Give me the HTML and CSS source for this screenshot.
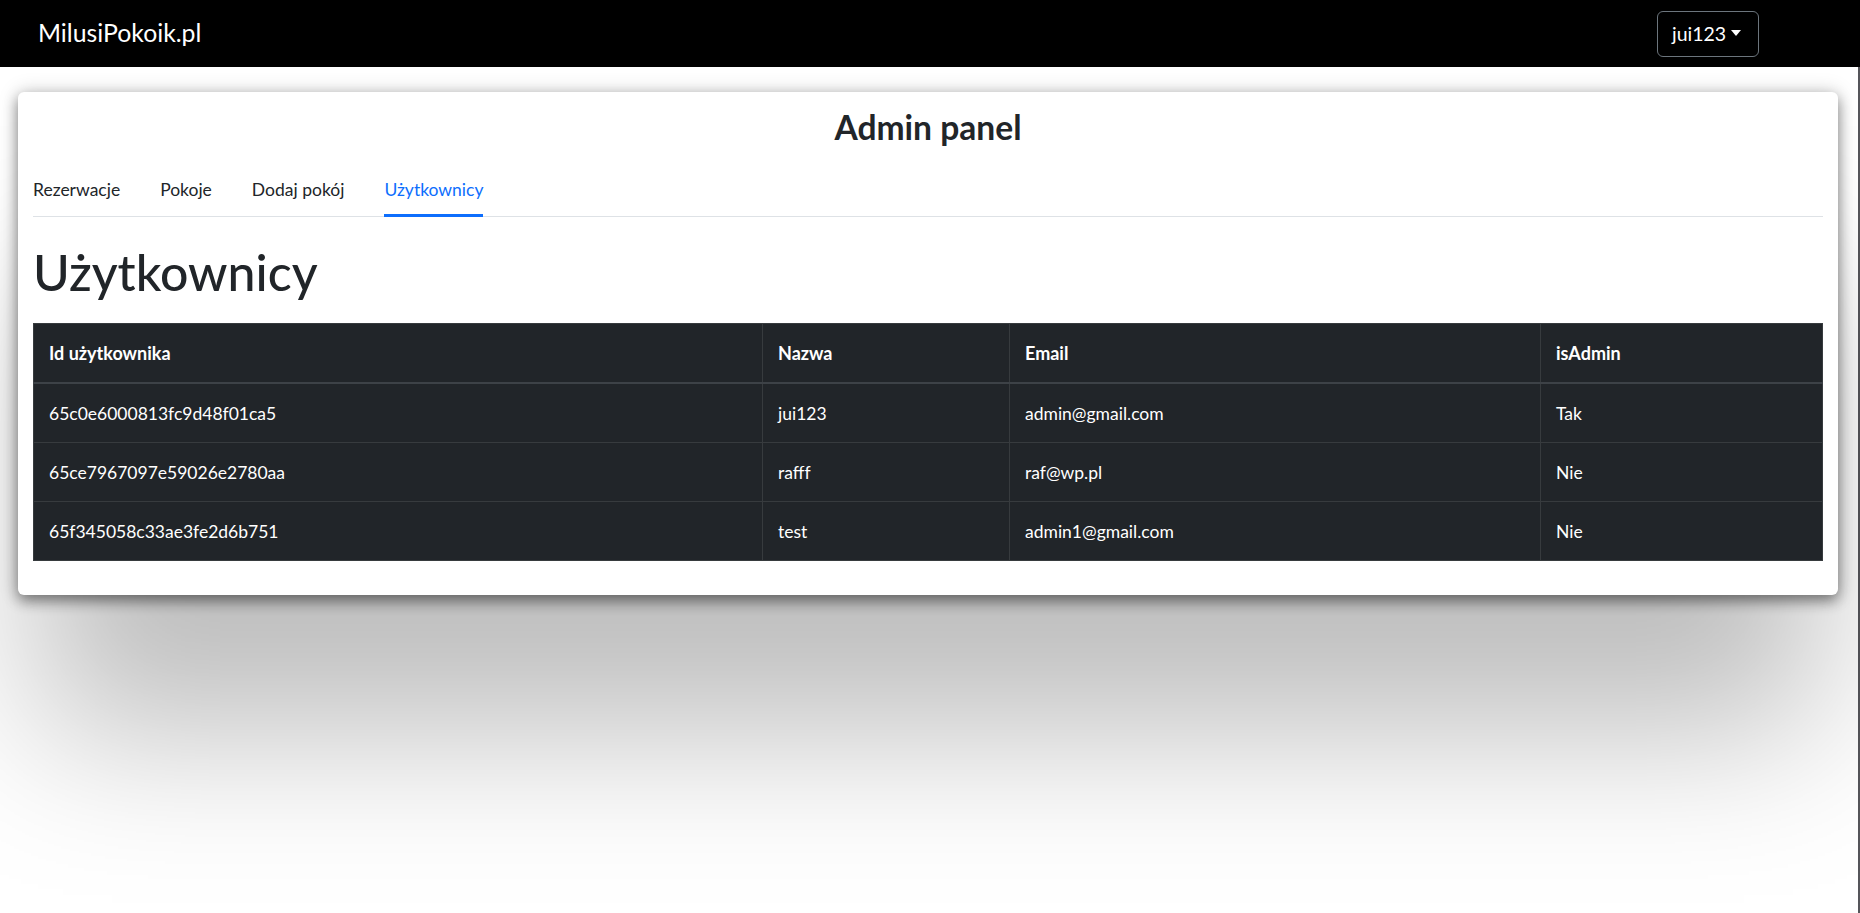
FILE: index.html
```html
<!DOCTYPE html>
<html lang="pl">
<head>
<meta charset="utf-8">
<title>MilusiPokoik.pl</title>
<link rel="stylesheet" href="styles.css">
</head>
<body>
<header class="navbar">
  <a class="brand" href="#">MilusiPokoik.pl</a>
  <button class="user-btn" type="button"><span>jui123</span><span class="caret"></span></button>
</header>
<main class="page">
  <section class="card">
    <h3 class="panel-title">Admin panel</h3>
    <nav class="tabs">
      <a class="tab" href="#">Rezerwacje</a>
      <a class="tab" href="#">Pokoje</a>
      <a class="tab" href="#">Dodaj pokój</a>
      <a class="tab active" href="#">Użytkownicy</a>
    </nav>
    <h1 class="heading">Użytkownicy</h1>
    <table class="users">
      <colgroup>
        <col class="c-id"><col class="c-name"><col class="c-email"><col class="c-admin">
      </colgroup>
      <thead>
        <tr><th>Id użytkownika</th><th>Nazwa</th><th>Email</th><th>isAdmin</th></tr>
      </thead>
      <tbody>
        <tr><td>65c0e6000813fc9d48f01ca5</td><td>jui123</td><td>admin@gmail.com</td><td>Tak</td></tr>
        <tr><td>65ce7967097e59026e2780aa</td><td>rafff</td><td>raf@wp.pl</td><td>Nie</td></tr>
        <tr><td>65f345058c33ae3fe2d6b751</td><td>test</td><td>admin1@gmail.com</td><td>Nie</td></tr>
      </tbody>
    </table>
  </section>
</main>
</body>
</html>
```
FILE: styles.css
```css
* { box-sizing: border-box; }
html, body { margin: 0; padding: 0; }
body {
  font-family: Lato, "Open Sans", sans-serif;
  color: #212529;
  background: #fff;
  width: 1860px;
  height: 913px;
  overflow: hidden;
}
.navbar {
  height: 67px;
  background: #000;
  display: flex;
  align-items: center;
  justify-content: space-between;
  padding: 0 101px 0 38px;
}
.brand {
  color: #fff;
  text-decoration: none;
  font-size: 24.8px;
  line-height: 1;
}
.user-btn {
  height: 46px;
  width: 102px;
  background: transparent;
  border: 1px solid #6c757d;
  border-radius: 6px;
  color: #fff;
  font-family: inherit;
  font-size: 19.5px;
  display: flex;
  align-items: center;
  justify-content: flex-start;
  padding: 0 0 0 14px;
  gap: 5px;
}
.caret {
  width: 0;
  height: 0;
  border-left: 5.5px solid transparent;
  border-right: 5.5px solid transparent;
  border-top: 6px solid #fff;
  margin-top: -2px;
}
.page {
  height: 846px;
  border-right: 2px solid #55555a;
  padding: 25px 20px 0 18px;
}
.card {
  background: #fff;
  border-radius: 6px;
  padding: 15px 15px 34px;
  box-shadow:
    0 0 20px rgba(0,0,0,.18),
    0 6px 14px rgba(0,0,0,.42),
    0 157px 150px -20px rgba(0,0,0,.26);
}
.panel-title {
  margin: 0;
  text-align: center;
  font-size: 33.6px;
  line-height: 40px;
  font-weight: 700;
}
.tabs {
  display: flex;
  gap: 40px;
  margin-top: 18px;
  border-bottom: 1px solid #dee2e6;
}
.tab {
  color: #212529;
  text-decoration: none;
  font-size: 17.5px;
  line-height: 29px;
  padding: 10px 0 10px;
  border-bottom: 3px solid transparent;
  margin-bottom: -1px;
}
.tab.active {
  color: #0d6efd;
  border-bottom-color: #0d6efd;
}
.heading {
  margin: 26px 0 22px;
  font-size: 50px;
  line-height: 58px;
  font-weight: 500;
}
.users {
  width: 100%;
  border-collapse: collapse;
  background: #212529;
  color: #fff;
  font-size: 17.5px;
  border: 1px solid #373b3e;
}
.c-id { width: 729px; }
.c-name { width: 247px; }
.c-email { width: 531px; }
.c-admin { width: auto; }
.users th, .users td {
  text-align: left;
  border: 1px solid #373b3e;
  padding: 14.5px 15px;
  line-height: 29px;
}
.users th { font-weight: 700; font-size: 18px; }
.users thead th { border-bottom: 2px solid #3d4247; }
```
